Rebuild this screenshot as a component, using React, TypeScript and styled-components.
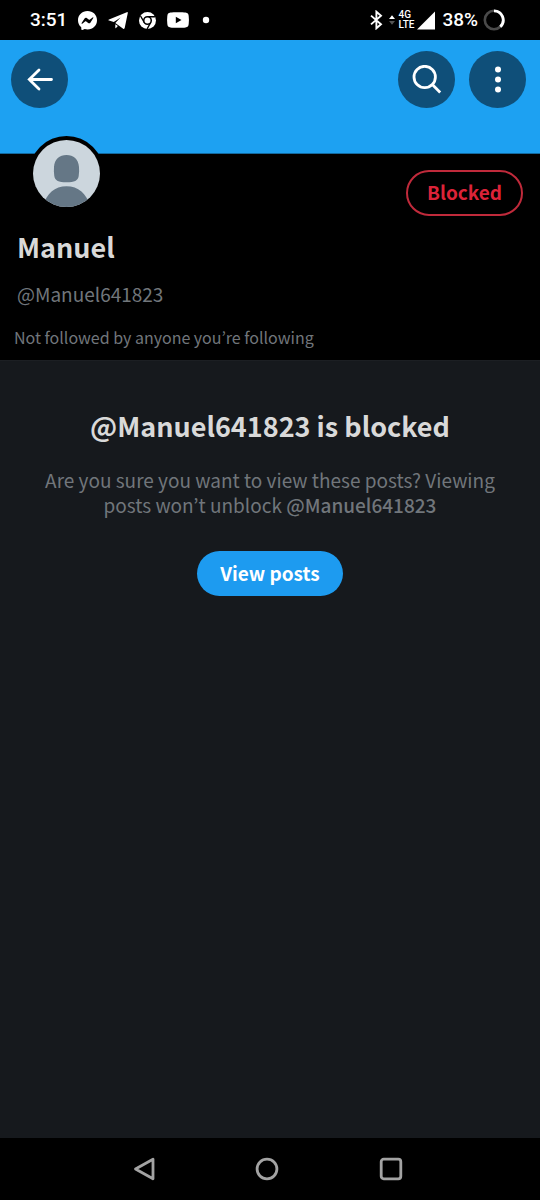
import React from "react";
import styled, { createGlobalStyle } from "styled-components";

const GlobalStyle = createGlobalStyle`
  *, *::before, *::after { box-sizing: border-box; }
  body {
    margin: 0;
    background: #000;
    font-family: "Noto Sans CJK KR", "Noto Sans", sans-serif;
  }
  button { font-family: inherit; cursor: pointer; }
  svg { display: block; flex: none; }
`;

const Screen = styled.div`
  min-height: 100vh;
  display: flex;
  flex-direction: column;
  background: #000;
`;

const StatusBar = styled.div`
  height: 40px;
  padding: 0 35px 0 30px;
  display: flex;
  align-items: center;
  justify-content: space-between;
  color: #fff;
  font: 500 19px/24px Roboto, sans-serif;
`;

const StatusGroup = styled.div<{ $gap: number }>`
  display: flex;
  align-items: center;
  gap: ${(p) => p.$gap}px;
`;

const NetworkLabel = styled.span`
  display: flex;
  flex-direction: column;
  font: 500 10px/10px Roboto, sans-serif;
`;

const Banner = styled.header`
  height: 114px;
  padding: 11px 14px 0 11px;
  display: flex;
  align-items: flex-start;
  gap: 14px;
  background: #1da1f2;
  border-bottom: 1px solid #13699e;
`;

const RoundButton = styled.button<{ $pushed?: boolean }>`
  width: 57px;
  height: 57px;
  padding: 0;
  margin-right: ${(p) => (p.$pushed ? "auto" : "0")};
  display: grid;
  place-items: center;
  border: 0;
  border-radius: 50%;
  background: #0f4f79;
  color: #fff;
`;

const Profile = styled.section`
  padding: 0 17px 11px 14px;
  border-bottom: 1px solid #1c1f23;
`;

const ProfileTop = styled.div`
  display: flex;
  justify-content: space-between;
  align-items: flex-start;
`;

const Avatar = styled.div`
  margin: -18px 0 0 15px;
  padding: 4px;
  border-radius: 50%;
  background: #000;
`;

const PillButton = styled.button`
  border-radius: 23px;
  font-size: 19px;
  line-height: 24px;
  font-weight: 700;
`;

const BlockedButton = styled(PillButton)`
  height: 46px;
  margin-top: 16px;
  padding: 0 19px 2px;
  border: 2px solid #c02a3b;
  background: transparent;
  color: #dc2338;
`;

const ViewButton = styled(PillButton)`
  height: 45px;
  margin-top: 34px;
  padding: 0 23px 2px;
  border: 0;
  background: #1d9bf0;
  color: #fff;
`;

const Name = styled.h1`
  margin: 13px 3px 0;
  color: #d9d9d9;
  font-size: 27px;
  line-height: 36px;
  font-weight: 700;
`;

const Handle = styled.p`
  margin: 16px 3px 0;
  color: #71767b;
  font-size: 19px;
  line-height: 25px;
`;

const FollowNote = styled.p`
  margin: 19px 0 0;
  color: #71767b;
  font-size: 16px;
  line-height: 24px;
`;

const Notice = styled.main`
  flex: 1;
  padding: 47px 36px;
  display: flex;
  flex-direction: column;
  align-items: center;
  background: #16191d;
  text-align: center;
`;

const NoticeTitle = styled.h2`
  margin: 0;
  color: #d9d9d9;
  font-size: 27px;
  line-height: 36px;
  font-weight: 700;
`;

const NoticeText = styled.p`
  margin: 23px 0 0;
  color: #71767b;
  font-size: 19px;
  line-height: 25px;
`;

const Mention = styled.strong`
  font-weight: 500;
`;

const NavBar = styled.nav`
  height: 62px;
  padding: 0 137px 0 133px;
  display: flex;
  align-items: center;
  justify-content: space-between;
`;

const NavButton = styled.button`
  padding: 0;
  border: 0;
  background: transparent;
  color: #a3a3a3;
`;

const MessengerIcon = () => (
  <svg width="19" height="19" viewBox="0 0 24 24" aria-label="Messenger">
    <path fill="#fff" d="M12 0C5.2 0 0 5 0 11.6c0 3.500 1.400 6.500 3.800 8.600.2.200.3.400.3.700l.1 2.200c0 .7.7 1.100 1.300.8l2.400-1c.2-.1.400-.1.600-.1 1.100.3 2.300.5 3.500.5 6.800 0 12-5 12-11.700S18.800 0 12 0z" />
    <path fill="#000" d="M4.600 15.300l3.700-5.900c.6-.9 1.800-1.200 2.700-.5l2.900 2.100c.2.200.5.200.7 0l3.900-2.900c.5-.4 1.200.2.800.8l-3.700 5.800c-.6.900-1.800 1.200-2.700.5l-2.900-2.100c-.2-.2-.5-.2-.7 0l-3.900 3c-.5.400-1.200-.2-.8-.8z" />
  </svg>
);

const TelegramIcon = () => (
  <svg width="20" height="19" viewBox="0 0 20 19" aria-label="Telegram">
    <path fill="#fff" d="M18.800 1.200 1 8.500c-.7.300-.7.900 0 1.100l4.800 1.500 6.800-4.500-5.300 5.500 7.900 5.600c.7.500 1.300.2 1.500-.6L19.800 2c.1-.7-.3-1.100-1-.8z" />
    <path fill="#fff" d="M7.300 13.200v3.600c0 .4.400.5.700.2l1.900-1.900z" />
  </svg>
);

const ChromeIcon = () => (
  <svg width="17" height="17" viewBox="0 0 24 24" aria-label="Chrome">
    <circle cx="12" cy="12" r="12" fill="#fff" />
    <path fill="none" stroke="#000" strokeWidth="1.900" d="M12 6.700h10.500M7.400 14.700 2.200 5.700M16.600 14.700 11.400 24" />
    <circle cx="12" cy="12" r="5.300" fill="#fff" stroke="#000" strokeWidth="2.200" />
  </svg>
);

const YoutubeIcon = () => (
  <svg width="22" height="16" viewBox="0 0 22 16" aria-label="YouTube">
    <path fill="#fff" d="M3.500.5C6 .1 16 .1 18.500.5 20.800.9 21.400 1.700 21.700 4c.3 2.500.3 5.500 0 8-.3 2.300-.9 3.100-3.200 3.500-2.500.4-12.500.4-15 0C1.200 15.100.6 14.300.3 12 0 9.500 0 6.500.3 4 .6 1.700 1.200.9 3.500.5z" />
    <path fill="#000" d="M8.800 4.700v6.600l5.700-3.300z" />
  </svg>
);

const DotIcon = () => (
  <svg width="14" height="8" viewBox="0 0 14 8" aria-hidden="true">
    <circle cx="6" cy="4" r="3.200" fill="#fff" />
  </svg>
);

const BluetoothIcon = () => (
  <svg width="16" height="20" viewBox="0 0 16 20" aria-label="Bluetooth">
    <path fill="none" stroke="#fff" strokeWidth="1.900" d="M1 5.600 11 14.300 6.400 18.300V1.700L11 5.700 1 14.400" />
  </svg>
);

const DataIcon = () => (
  <svg width="6" height="10" viewBox="0 0 6 10" aria-hidden="true">
    <path fill="#fff" d="M3 .3 6 4H0z" />
    <path fill="#555" d="M3 9.700 0 6h6z" />
  </svg>
);

const SignalIcon = () => (
  <svg width="22" height="19" viewBox="0 0 22 19" aria-label="Signal">
    <path fill="#fff" d="M18 .5v18H0z" />
  </svg>
);

const BatteryIcon = () => (
  <svg width="24" height="22" viewBox="0 0 24 22" aria-hidden="true">
    <circle cx="13" cy="11" r="9.200" fill="none" stroke="#4a4a4a" strokeWidth="2.600" />
    <path fill="none" stroke="#fff" strokeWidth="2.800" d="M13 1.800A9.200 9.200 0 0 1 19.300 17.700" />
  </svg>
);

const BackIcon = () => (
  <svg width="26" height="24" viewBox="0 0 26 24" fill="none" stroke="currentColor" strokeWidth="2.800" strokeLinecap="round">
    <path d="M12 2 2.300 11.500l9.700 9.500M2.300 11.500H24.500" />
  </svg>
);

const SearchIcon = () => (
  <svg width="30" height="30" viewBox="0 0 30 30" fill="none" stroke="currentColor" strokeWidth="2.800">
    <circle cx="12.700" cy="12" r="10.700" />
    <path d="M20.300 19.600 28.200 27.500" />
  </svg>
);

const MoreIcon = () => (
  <svg width="8" height="28" viewBox="0 0 8 28" fill="currentColor">
    <circle cx="4" cy="3.500" r="3" />
    <circle cx="4" cy="13.500" r="3" />
    <circle cx="4" cy="23.500" r="3" />
  </svg>
);

const AvatarImage = () => (
  <svg width="67" height="67" viewBox="0 0 67 67" aria-label="Default profile picture">
    <defs>
      <clipPath id="avatar-clip">
        <circle cx="33.500" cy="33.500" r="33.500" />
      </clipPath>
    </defs>
    <g clipPath="url(#avatar-clip)">
      <rect width="67" height="67" fill="#ccd6dd" />
      <path fill="#657786" d="M33.500 15c7 0 12 4 12.500 12 .2 3 .2 6-.3 9-.8 4.800-4.200 6.200-12.200 6.200s-11.400-1.400-12.200-6.200c-.5-3-.5-6-.3-9 .5-8 5.500-12 12.500-12z" />
      <path fill="#657786" d="M10 67c3-13.500 12-20.800 23.500-20.800S54 53.500 57 67z" />
    </g>
  </svg>
);

const NavBackIcon = () => (
  <svg width="22" height="24" viewBox="0 0 22 24" fill="none" stroke="currentColor" strokeWidth="2.800" strokeLinejoin="round">
    <path d="M20 2.200v19.600L2.500 12z" />
  </svg>
);

const NavHomeIcon = () => (
  <svg width="24" height="24" viewBox="0 0 24 24" fill="none" stroke="currentColor" strokeWidth="2.800">
    <circle cx="12" cy="12" r="9.900" />
  </svg>
);

const NavRecentIcon = () => (
  <svg width="24" height="24" viewBox="0 0 24 24" fill="none" stroke="currentColor" strokeWidth="2.800">
    <rect x="2.200" y="2.200" width="19.600" height="19.600" rx="2.500" />
  </svg>
);

export default function App() {
  return (
    <>
      <GlobalStyle />
      <Screen>
        <StatusBar>
          <StatusGroup $gap={11}>
            <span>3:51</span>
            <MessengerIcon />
            <TelegramIcon />
            <ChromeIcon />
            <YoutubeIcon />
            <DotIcon />
          </StatusGroup>
          <StatusGroup $gap={3}>
            <BluetoothIcon />
            <DataIcon />
            <NetworkLabel>
              <span>4G</span>
              <span>LTE</span>
            </NetworkLabel>
            <SignalIcon />
            <span>38%</span>
            <BatteryIcon />
          </StatusGroup>
        </StatusBar>
        <Banner>
          <RoundButton type="button" aria-label="Back" $pushed>
            <BackIcon />
          </RoundButton>
          <RoundButton type="button" aria-label="Search">
            <SearchIcon />
          </RoundButton>
          <RoundButton type="button" aria-label="More options">
            <MoreIcon />
          </RoundButton>
        </Banner>
        <Profile>
          <ProfileTop>
            <Avatar>
              <AvatarImage />
            </Avatar>
            <BlockedButton type="button">Blocked</BlockedButton>
          </ProfileTop>
          <Name>Manuel</Name>
          <Handle>@Manuel641823</Handle>
          <FollowNote>Not followed by anyone you’re following</FollowNote>
        </Profile>
        <Notice>
          <NoticeTitle>@Manuel641823 is blocked</NoticeTitle>
          <NoticeText>
            Are you sure you want to view these posts? Viewing posts won’t
            unblock <Mention>@Manuel641823</Mention>
          </NoticeText>
          <ViewButton type="button">View posts</ViewButton>
        </Notice>
        <NavBar aria-label="System">
          <NavButton type="button" aria-label="Back">
            <NavBackIcon />
          </NavButton>
          <NavButton type="button" aria-label="Home">
            <NavHomeIcon />
          </NavButton>
          <NavButton type="button" aria-label="Recent apps">
            <NavRecentIcon />
          </NavButton>
        </NavBar>
      </Screen>
    </>
  );
}
